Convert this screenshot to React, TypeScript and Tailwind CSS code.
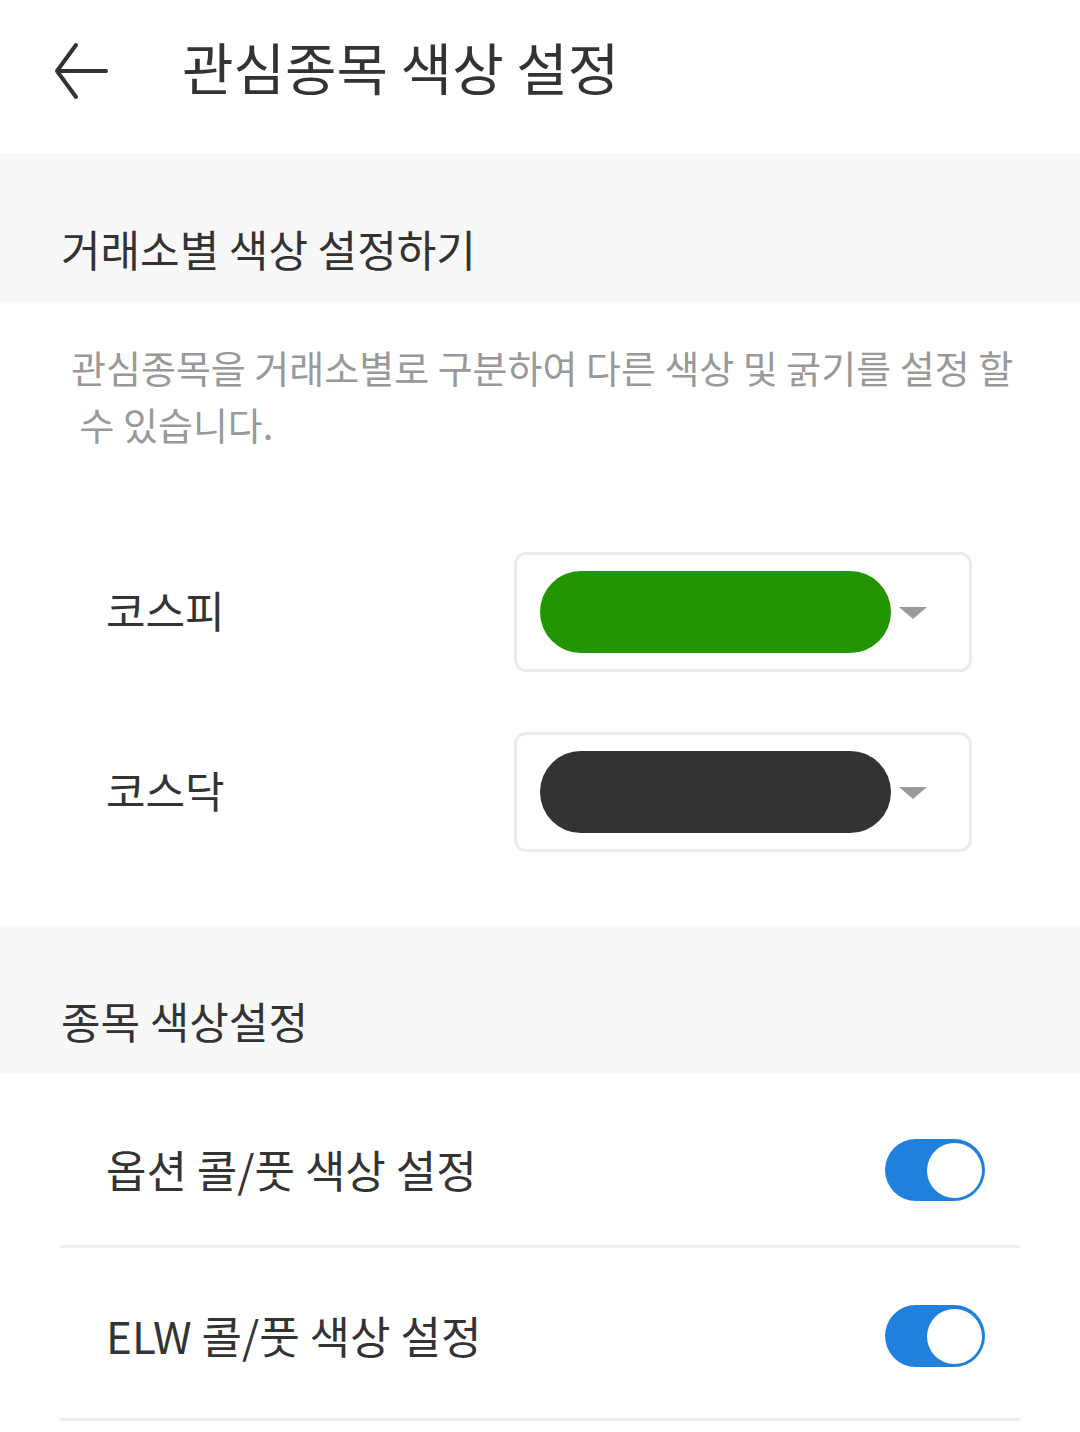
import React from "react";

const font = { fontFamily: '"Noto Sans CJK KR", "Noto Sans", sans-serif' };

function ColorSelect({ color }: { color: string }) {
  return (
    <div className="w-[458px] h-[120px] rounded-[12px] border-[3px] border-[#ebebeb] bg-white flex items-center pl-[23px]">
      <div className="w-[351px] h-[82px] rounded-full" style={{ backgroundColor: color }} />
      <svg width="30" height="14" viewBox="0 0 30 14" className="ml-[7px] mt-[2px]">
        <polygon points="1,1 29,1 15,13" fill="#9a9a9a" />
      </svg>
    </div>
  );
}

function Toggle() {
  return (
    <div className="w-[100px] h-[62px] rounded-full bg-[#1f80dd] flex items-center justify-end pr-[3px]">
      <div className="w-[55px] h-[55px] rounded-full bg-white" />
    </div>
  );
}

export default function App() {
  return (
    <div className="w-[1080px] h-[1432px] bg-white overflow-hidden text-[#333333]" style={font}>
      <div className="h-[153px] flex items-center">
        <svg width="60" height="70" viewBox="0 0 60 70" className="ml-[52px] mt-[-14px]">
          <path d="M54 36 H5 M24 10 L5 36 L24 62" fill="none" stroke="#333333" strokeWidth="4" strokeLinecap="round" strokeLinejoin="round" />
        </svg>
        <div className="ml-[70px] text-[56px] leading-none mt-[-22px]">관심종목 색상 설정</div>
      </div>

      <div className="h-[149px] bg-[#f8f8f8] flex items-end pb-[32px] pl-[61px]">
        <div className="text-[43px] leading-none">거래소별 색상 설정하기</div>
      </div>

      <div className="pl-[71px] pt-[36px] text-[38px] leading-[57px] text-[#999999] whitespace-pre">
        {"관심종목을 거래소별로 구분하여 다른 색상 및 굵기를 설정 할\n 수 있습니다."}
      </div>

      <div className="flex items-center mt-[100px] pl-[106px]">
        <div className="w-[408px] text-[43px] leading-none mt-[-6px]">코스피</div>
        <ColorSelect color="#219600" />
      </div>
      <div className="flex items-center mt-[60px] pl-[106px]">
        <div className="w-[408px] text-[43px] leading-none mt-[-6px]">코스닥</div>
        <ColorSelect color="#333333" />
      </div>

      <div className="mt-[74px] h-[147px] bg-[#f8f8f8] flex items-end pb-[31px] pl-[61px]">
        <div className="text-[43px] leading-none">종목 색상설정</div>
      </div>

      <div className="px-[60px]">
        <div className="h-[175px] pt-[22px] flex items-center justify-between pl-[46px] pr-[35px] border-b-[3px] border-[#eeeeee]">
          <div className="text-[44px] leading-none mt-[-2px]">옵션 콜/풋 색상 설정</div>
          <Toggle />
        </div>
        <div className="h-[173px] pt-[6px] flex items-center justify-between pl-[46px] pr-[35px] border-b-[3px] border-[#eeeeee]">
          <div className="text-[44px] leading-none mt-[-2px]">ELW 콜/풋 색상 설정</div>
          <Toggle />
        </div>
      </div>
    </div>
  );
}
